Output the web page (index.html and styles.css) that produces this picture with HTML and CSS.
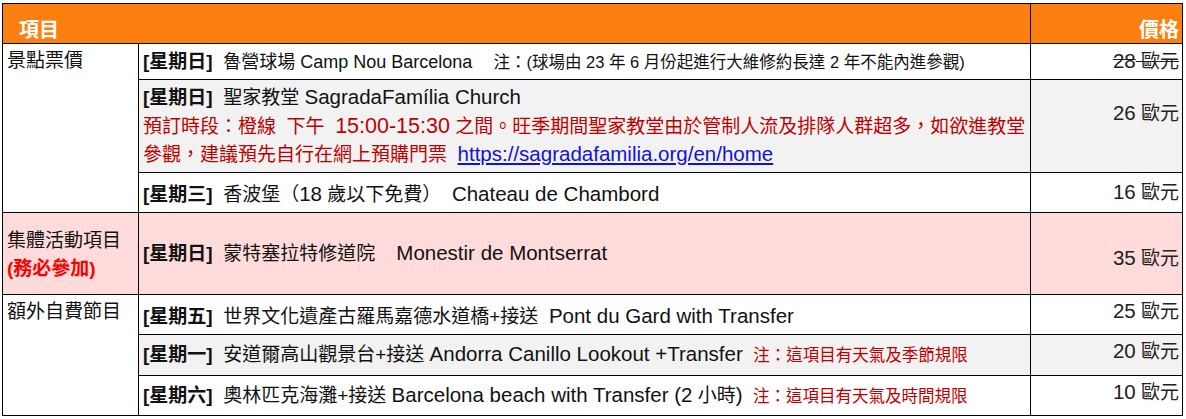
FILE: index.html
```html
<!DOCTYPE html>
<html lang="zh-Hant">
<head>
<meta charset="utf-8">
<title>行程費用</title>
<link rel="stylesheet" href="styles.css">
</head>
<body>
<table class="tbl">
  <colgroup>
    <col class="c1">
    <col class="c2">
    <col class="c3">
  </colgroup>
  <thead>
    <tr class="hd">
      <th colspan="2" class="th-l">項目</th>
      <th class="th-r">價格</th>
    </tr>
  </thead>
  <tbody>
    <tr class="r1">
      <td rowspan="3" class="cat">景點票價</td>
      <td><b class="day">[星期日]</b>&nbsp; <span class="sm">魯營球場 Camp Nou Barcelona</span>&nbsp;&nbsp;&nbsp; <span class="note">注：(球場由 23 年 6 月份起進行大維修約長達 2 年不能內進參觀)</span></td>
      <td class="price"><span class="strike"><span class="en">28</span> 歐元</span></td>
    </tr>
    <tr class="r2 gray">
      <td class="multi"><b class="day">[星期日]</b>&nbsp; 聖家教堂 <span class="en">SagradaFamília Church</span><br>
        <span class="red">預訂時段：橙線&nbsp; 下午&nbsp; <span class="en wide">15:00-15:30</span> 之間。旺季期間聖家教堂由於管制人流及排隊人群超多，如欲進教堂<br>參觀，建議預先自行在網上預購門票</span>&nbsp; <a class="link en" href="#">https://sagradafamilia.org/en/home</a></td>
      <td class="price p-r2"><span class="en">26</span> 歐元</td>
    </tr>
    <tr class="r3">
      <td class="low"><b class="day">[星期三]</b>&nbsp; 香波堡（<span class="en">18</span> 歲以下免費）&nbsp; <span class="en">Chateau de Chambord</span></td>
      <td class="price"><span class="en">16</span> 歐元</td>
    </tr>
    <tr class="r4 pink">
      <td class="cat mid">集體活動項目<br><span class="must">(務必參加)</span></td>
      <td><b class="day">[星期日]</b>&nbsp; 蒙特塞拉特修道院&nbsp;&nbsp;&nbsp; <span class="en">Monestir de Montserrat</span></td>
      <td class="price p-r4"><span class="en">35</span> 歐元</td>
    </tr>
    <tr class="r5">
      <td rowspan="3" class="cat">額外自費節目</td>
      <td class="low"><b class="day">[星期五]</b>&nbsp; 世界文化遺產古羅馬嘉德水道橋+接送&nbsp; <span class="en">Pont du Gard with Transfer</span></td>
      <td class="price up"><span class="en">25</span> 歐元</td>
    </tr>
    <tr class="r6 gray">
      <td><b class="day">[星期一]</b>&nbsp; 安道爾高山觀景台+接送 <span class="en">Andorra Canillo Lookout +Transfer</span>&nbsp; <span class="note red">注：這項目有天氣及季節規限</span></td>
      <td class="price up"><span class="en">20</span> 歐元</td>
    </tr>
    <tr class="r7">
      <td><b class="day">[星期六]</b>&nbsp; 奧林匹克海灘+接送 <span class="en">Barcelona beach with Transfer (2</span> 小時<span class="en">)</span>&nbsp; <span class="note red">注：這項目有天氣及時間規限</span></td>
      <td class="price up"><span class="en">10</span> 歐元</td>
    </tr>
  </tbody>
</table>
</body>
</html>
```
FILE: styles.css
```css
html, body {
  background: #ffffff;
}
body {
  margin: 3px 0 0 2px;
  font-family: "Liberation Sans", Arial, "Noto Sans CJK TC", sans-serif;
  font-size: 19px;
  color: #111111;
}
.tbl {
  border-collapse: collapse;
  width: 1180px;
  table-layout: fixed;
}
.c1 { width: 136px; }
.c2 { width: 892px; }
.c3 { width: 152px; }

.tbl th,
.tbl td {
  border: 1px solid #000000;
  padding: 2px 4px 2px 4px;
  line-height: 26px;
  vertical-align: middle;
  text-align: left;
  white-space: nowrap;
}
.tbl th {
  background: #fd7f10;
  color: #ffffff;
  font-weight: bold;
  font-size: 20px;
  vertical-align: bottom;
  padding-bottom: 0;
}
.hd { height: 40px; }
.tbl th.th-l { padding-left: 16px; }
.tbl th.th-r {
  text-align: right;
  padding-right: 3px;
}

.r1 { height: 36px; }
.r2 { height: 93px; }
.r3 { height: 40px; }
.r4 { height: 82px; }
.r5 { height: 40px; }
.r6 { height: 41px; }
.r7 { height: 40px; }

.tbl td.multi {
  line-height: 28.5px;
  padding-top: 4px;
  padding-bottom: 2px;
}

.gray td { background: #f2f2f2; }
.pink td { background: #ffdbdb; }

.tbl td.cat {
  vertical-align: top;
  padding-top: 4px;
  background: #ffffff;
}
.tbl .pink td.cat { background: #ffdbdb; }
.tbl td.cat.mid {
  vertical-align: middle;
  line-height: 28px;
}

.day { font-weight: bold; }
.en { font-size: 20.5px; line-height: 1; }
.en.wide { font-size: 21.5px; }
.sm { font-size: 18px; line-height: 1; }
.note { font-size: 16.5px; line-height: 1; }
.note .en { font-size: 16.5px; }
.red { color: #c00000; }
.must {
  color: #ff0000;
  font-weight: bold;
}
.link {
  color: #1111dd;
  text-decoration: underline;
}

.tbl td.price {
  text-align: right;
  padding-right: 3px;
  color: #222222;
}
.strike { text-decoration: line-through; }
.tbl td.p-r2 { padding-bottom: 27px; }
.tbl td.p-r4 { padding-top: 12px; }
.tbl td.up { padding-bottom: 8px; }
.tbl td.low { padding-top: 7px; }
```
